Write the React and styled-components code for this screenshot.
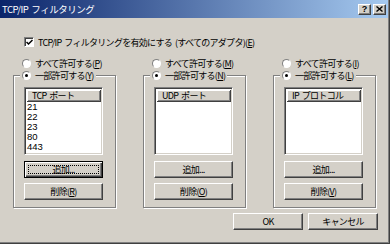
import React from 'react';
import styled, { createGlobalStyle, css } from 'styled-components';

const FONT = `"Noto Sans CJK JP", "Liberation Sans", sans-serif`;

const Global = createGlobalStyle`
  html, body { margin: 0; padding: 0; background: #D4D0C8; }
  * { box-sizing: border-box; }
`;

const Window = styled.div`
  width: 390px;
  height: 244px;
  background: #D4D0C8;
  border-right: 1px solid #404040;
  border-bottom: 1px solid #404040;
  box-shadow: inset -1px -1px 0 #808080;
  display: flex;
  flex-direction: column;
  font-family: ${FONT};
  font-size: 9px;
  letter-spacing: -0.7px;
  word-spacing: 1.5px;
  color: #000;
  overflow: hidden;
`;

const TitleBar = styled.div`
  flex: none;
  height: 18px;
  margin-right: 1px;
  padding: 0 2px 0 2px;
  display: flex;
  align-items: center;
  background: linear-gradient(to right, #0A246A, #A6CAF0);
  color: #fff;
`;

const TitleText = styled.span`
  flex: 1;
  line-height: 18px;
  font-size: 9.5px;
  letter-spacing: -0.5px;
`;

const TitleButtons = styled.div`
  display: flex;
  gap: 2px;
`;

const TitleButton = styled.div`
  width: 13px;
  height: 11px;
  background: #D4D0C8;
  border: 1px solid;
  border-color: #fff #404040 #404040 #fff;
  box-shadow: inset -1px -1px 0 #808080;
  display: flex;
  align-items: center;
  justify-content: center;
  color: #000;
  font-family: "Liberation Sans", sans-serif;
  font-weight: bold;
  font-size: 9px;
  line-height: 9px;
  letter-spacing: 0;
`;

const Content = styled.div`
  flex: 1;
  display: flex;
  flex-direction: column;
  padding: 18px 11px 0 13px;
`;

const CheckRow = styled.label`
  display: flex;
  align-items: center;
  height: 12px;
  margin-left: 11px;
  gap: 4px;
  white-space: nowrap;
`;

const CheckBox = styled.span`
  flex: none;
  width: 10px;
  height: 10px;
  background: #fff;
  border: 1px solid;
  border-color: #808080 #fff #fff #808080;
  box-shadow: inset 1px 1px 0 #404040;
  display: flex;
  align-items: center;
  justify-content: center;
`;

const U = styled.span`
  text-decoration: underline;
`;

const Columns = styled.div`
  display: flex;
  gap: 27px;
  margin-top: 9px;
`;

const Column = styled.div`
  width: 103px;
  display: flex;
  flex-direction: column;
`;

const RadioRow = styled.label`
  display: flex;
  align-items: center;
  height: 12px;
  gap: 4px;
  white-space: nowrap;
  padding-left: ${p => p.$indent || 0}px;
`;

const RadioCircle = styled.span`
  flex: none;
  position: relative;
  width: 9px;
  height: 9px;
  border-radius: 50%;
  background: #fff;
  border: 1px solid;
  border-color: #808080 #fff #fff #808080;
  ${p => p.$checked && css`
    &::after {
      content: '';
      position: absolute;
      left: 2px;
      top: 2px;
      width: 3px;
      height: 3px;
      border-radius: 50%;
      background: #000;
    }
  `}
`;

const Group = styled.fieldset`
  margin: 0;
  padding: 0 12px 7px 10px;
  min-inline-size: 0;
  border: 1px solid #808080;
  box-shadow: 1px 1px 0 #fff, inset 1px 1px 0 #fff;
  display: flex;
  flex-direction: column;
`;

const Legend = styled.legend`
  margin-left: -4px;
  padding: 0 2px;
  background: #D4D0C8;
`;

const ListBox = styled.div`
  margin-top: 6px;
  height: 68px;
  background: #fff;
  border: 1px solid;
  border-color: #808080 #fff #fff #808080;
  box-shadow: inset 1px 1px 0 #404040, inset -1px -1px 0 #D4D0C8;
  padding: 1px;
  display: flex;
  flex-direction: column;
  overflow: hidden;
`;

const ListHeader = styled.div`
  flex: none;
  height: 12px;
  line-height: 11px;
  padding-left: 5px;
  background: #D4D0C8;
  border-right: 1px solid #404040;
  border-bottom: 1px solid #404040;
  box-shadow: inset 1px 1px 0 #fff, inset -1px -1px 0 #808080;
  margin: 1px 0 0 1px;
`;

const ListItem = styled.div`
  height: 10px;
  line-height: 10px;
  padding-left: 1px;
  font-family: "Liberation Sans", sans-serif;
  font-size: 9.5px;
  letter-spacing: 0;
`;

const Button = styled.button`
  position: relative;
  flex: none;
  width: ${p => p.$width ? `${p.$width}px` : '100%'};
  height: 17px;
  margin-top: ${p => p.$mt || 0}px;
  padding: 0;
  background: #D4D0C8;
  color: #000;
  font: inherit;
  letter-spacing: inherit;
  border: 1px solid;
  border-color: #fff #404040 #404040 #fff;
  box-shadow: inset -1px -1px 0 #808080;
  ${p => p.$focused && css`
    border-color: #000;
    box-shadow: inset 1px 1px 0 #fff, inset -1px -1px 0 #404040, inset -2px -2px 0 #808080;
    &::after {
      content: '';
      position: absolute;
      inset: 3px;
      border: 1px dotted #000;
    }
  `}
`;

const Footer = styled.div`
  display: flex;
  justify-content: flex-end;
  gap: 5px;
  margin-top: 5px;
`;

const groups = [
  { all: 'P', some: 'Y', header: 'TCP ポート', items: ['21', '22', '23', '80', '443'], del: 'R', focused: true },
  { all: 'M', some: 'N', header: 'UDP ポート', items: [], del: 'O' },
  { all: 'I', some: 'L', header: 'IP プロトコル', items: [], del: 'V' },
];

function Radio({ checked, children, indent }) {
  return (
    <RadioRow $indent={indent}>
      <RadioCircle $checked={checked} />
      <span>{children}</span>
    </RadioRow>
  );
}

export default function App() {
  return (
    <>
      <Global />
      <Window>
        <TitleBar>
          <TitleText>TCP/IP フィルタリング</TitleText>
          <TitleButtons>
            <TitleButton>?</TitleButton>
            <TitleButton>
              <svg width="7" height="6" viewBox="0 0 7 6">
                <path d="M0.5 0.5 L6.5 5.5 M6.5 0.5 L0.5 5.5" stroke="#000" strokeWidth="1.4" />
              </svg>
            </TitleButton>
          </TitleButtons>
        </TitleBar>
        <Content>
          <CheckRow>
            <CheckBox>
              <svg width="7" height="7" viewBox="0 0 7 7">
                <path d="M0.5 3 L2.5 5 L6.5 1" fill="none" stroke="#000" strokeWidth="1.5" />
              </svg>
            </CheckBox>
            <span>TCP/IP フィルタリングを有効にする (すべてのアダプタ)(<U>E</U>)</span>
          </CheckRow>
          <Columns>
            {groups.map(g => (
              <Column key={g.all}>
                <Radio indent={9}>すべて許可する(<U>{g.all}</U>)</Radio>
                <Group>
                  <Legend>
                    <Radio checked>一部許可する(<U>{g.some}</U>)</Radio>
                  </Legend>
                  <ListBox>
                    <ListHeader>{g.header}</ListHeader>
                    {g.items.map(i => <ListItem key={i}>{i}</ListItem>)}
                  </ListBox>
                  <Button $mt={6} $focused={g.focused}>追加...</Button>
                  <Button $mt={5}>削除(<U>{g.del}</U>)</Button>
                </Group>
              </Column>
            ))}
          </Columns>
          <Footer>
            <Button $width={70}>OK</Button>
            <Button $width={70}>キャンセル</Button>
          </Footer>
        </Content>
      </Window>
    </>
  );
}
